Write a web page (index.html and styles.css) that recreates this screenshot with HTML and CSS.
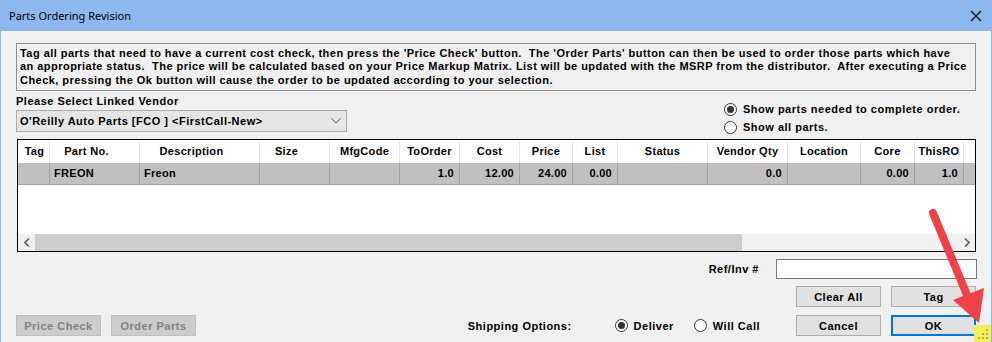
FILE: index.html
```html
<!DOCTYPE html>
<html lang="en">
<head>
    <meta charset="UTF-8">
    <title>Parts Ordering Revision</title>
    <link rel="stylesheet" href="styles.css">
</head>
<body>
<div class="window">
    <div class="titlebar">
        <span class="title">Parts Ordering Revision</span>
        <svg class="close" width="12" height="12" viewBox="0 0 12 12">
            <path d="M1 1 L11 11 M11 1 L1 11" stroke="#000" stroke-width="1.1" fill="none"/>
        </svg>
    </div>
    <div class="content">
        <div class="info">
            Tag all parts that need to have a current cost check, then press the 'Price Check' button.&nbsp; The 'Order Parts' button can then be used to order those parts which have<br>
            an appropriate status.&nbsp; The price will be calculated based on your Price Markup Matrix. List will be updated with the MSRP from the distributor.&nbsp; After executing a Price<br>
            Check, pressing the Ok button will cause the order to be updated according to your selection.
        </div>
        <div class="vendor-row">
            <div class="vendor">
                <div class="label">Please Select Linked Vendor</div>
                <div class="combo">
                    <span>O'Reilly Auto Parts [FCO ] &lt;FirstCall-New&gt;</span>
                    <svg width="10" height="6" viewBox="0 0 10 6"><path d="M0.5 0.5 L5 5 L9.5 0.5" stroke="#666" fill="none"/></svg>
                </div>
            </div>
            <div class="show-opts">
                <div class="radio"><span class="dot on"></span>Show parts needed to complete order.</div>
                <div class="radio"><span class="dot"></span>Show all parts.</div>
            </div>
        </div>
        <div class="grid">
            <div class="row head">
                <div class="tag">Tag</div>
                <div class="lft">Part No.</div>
                <div class="lft">Description</div>
                <div class="lft">Size</div>
                <div>MfgCode</div>
                <div>ToOrder</div>
                <div>Cost</div>
                <div>Price</div>
                <div>List</div>
                <div>Status</div>
                <div>Vendor Qty</div>
                <div>Location</div>
                <div>Core</div>
                <div>ThisRO</div>
                <div class="fill"></div>
            </div>
            <div class="row data">
                <div></div>
                <div class="txt">FREON</div>
                <div class="txt">Freon</div>
                <div></div>
                <div></div>
                <div class="num">1.0</div>
                <div class="num">12.00</div>
                <div class="num">24.00</div>
                <div class="num">0.00</div>
                <div></div>
                <div class="num">0.0</div>
                <div></div>
                <div class="num">0.00</div>
                <div class="num">1.0</div>
                <div class="fill"></div>
            </div>
            <div class="grid-space"></div>
            <div class="hscroll">
                <div class="sarrow"><svg width="6" height="9" viewBox="0 0 6 9"><path d="M5 0.5 L1 4.5 L5 8.5" stroke="#606060" stroke-width="1.6" fill="none"/></svg></div>
                <div class="thumb"></div>
                <div class="track"></div>
                <div class="sarrow"><svg width="6" height="9" viewBox="0 0 6 9"><path d="M1 0.5 L5 4.5 L1 8.5" stroke="#606060" stroke-width="1.6" fill="none"/></svg></div>
            </div>
        </div>
        <div class="ref-row">
            <span>Ref/Inv #</span>
            <div class="input"></div>
        </div>
        <div class="btn-row">
            <div class="btn">Clear All</div>
            <div class="btn">Tag</div>
        </div>
        <div class="bottom-row">
            <div class="btn disabled">Price Check</div>
            <div class="btn disabled">Order Parts</div>
            <div class="spacer"></div>
            <span class="ship">Shipping Options:</span>
            <div class="radio deliver"><span class="dot on"></span>Deliver</div>
            <div class="radio willcall"><span class="dot"></span>Will Call</div>
            <div class="btn">Cancel</div>
            <div class="btn ok">OK</div>
        </div>
    </div>
    <div class="grip">
        <svg width="17" height="17" viewBox="0 0 17 17" fill="#b8b440">
            <rect x="12" y="4" width="2" height="2"/>
            <rect x="8" y="8" width="2" height="2"/><rect x="12" y="8" width="2" height="2"/>
            <rect x="4" y="12" width="2" height="2"/><rect x="8" y="12" width="2" height="2"/><rect x="12" y="12" width="2" height="2"/>
        </svg>
    </div>
    <svg class="arrow" width="992" height="342" viewBox="0 0 992 342">
        <line x1="933" y1="213" x2="967" y2="295" stroke="#ef4146" stroke-width="8" stroke-linecap="round"/>
        <polygon points="953,300 984,288 979,323" fill="#ef4146"/>
    </svg>
</div>
</body>
</html>
```

FILE: styles.css
```css
body{
    margin:0;
    background:#f0f0f0;
    font:bold 11px "Liberation Sans", Arial, sans-serif;
    letter-spacing:0.5px;
    color:#000;
}
.window{
    position:relative;
    width:992px;
    height:342px;
    box-sizing:border-box;
    border-left:1px solid #8cb8ee;
    border-right:1px solid #8cb8ee;
    overflow:hidden;
}
.titlebar{
    height:31px;
    background:#8cb8ee;
    display:flex;
    align-items:center;
    justify-content:space-between;
    padding:0 9px 0 8px;
}
.title{font:normal 11px "Noto Sans", sans-serif;letter-spacing:0;}
.content{padding:12px 15px 0;}

.info{
    height:40px;
    border:1px solid #8e8e8e;
    padding:3px;
    line-height:13.3px;
    letter-spacing:0.46px;
    white-space:nowrap;
}

.vendor-row{display:flex;height:41px;}
.vendor .label{margin-top:4px;line-height:13px;}
.combo{
    margin-top:2px;
    width:331px;
    height:22px;
    box-sizing:border-box;
    border:1px solid #acacac;
    background:#e5e5e5;
    display:flex;
    align-items:center;
    justify-content:space-between;
    padding:0 5px 0 3px;
}
.show-opts{margin-left:auto;width:252px;padding-top:9px;}
.radio{display:flex;align-items:center;height:18px;}
.dot{
    width:13px;
    height:13px;
    box-sizing:border-box;
    border:1px solid #333;
    border-radius:50%;
    background:#fff;
    margin-right:6px;
    display:flex;
    align-items:center;
    justify-content:center;
}
.dot.on::after{
    content:"";
    width:7px;
    height:7px;
    border-radius:50%;
    background:#333;
}

.grid{
    margin:7px 0 0 1px;
    height:113px;
    box-sizing:border-box;
    border:1px solid #000;
    background:#fff;
    display:flex;
    flex-direction:column;
}
.row{
    display:grid;
    grid-template-columns:32px 90px 120px 70px 70px 60px 60px 53px 45px 90px 80px 73px 54px 49px 1fr;
    letter-spacing:0.3px;
}
.row > div{
    box-sizing:border-box;
    white-space:nowrap;
    overflow:hidden;
}
.head{height:22px;margin-top:1px;}
.head > div{
    border-right:1px solid #e3e3e3;
    text-align:center;
    line-height:21px;
}
.head .lft{padding-right:16px;}
.head .tag{padding-left:2px;}
.head .fill{border-right:0;}
.data{height:22px;background:#c0c0c0;}
.data > div{
    border-right:1px solid #a0a0a0;
    border-bottom:1px solid #a0a0a0;
    line-height:21px;
}
.data .txt{padding-left:4px;}
.data .num{text-align:right;padding-right:5px;}
.data .fill{border-right:0;}
.grid-space{flex:1;}
.hscroll{display:flex;height:17px;background:#f0f0f0;}
.sarrow{width:17px;display:flex;align-items:center;justify-content:center;}
.thumb{width:707px;background:#cdcdcd;}
.track{flex:1;}

.ref-row{
    display:flex;
    justify-content:flex-end;
    align-items:center;
    gap:17px;
    margin-top:7px;
}
.input{
    width:201px;
    height:20px;
    box-sizing:border-box;
    border:1px solid #7a7a7a;
    background:#fff;
    margin-right:-1px;
}
.btn-row{
    display:flex;
    justify-content:flex-end;
    gap:10px;
    margin-top:7px;
}
.btn{
    width:85px;
    height:21px;
    box-sizing:border-box;
    border:1px solid #adadad;
    background:#e1e1e1;
    display:flex;
    align-items:center;
    justify-content:center;
}
.btn.disabled{background:#cccccc;border-color:#bfbfbf;color:#838383;}
.btn.ok{border:2px solid #0078d7;}
.bottom-row{
    display:flex;
    align-items:center;
    gap:10px;
    margin-top:8px;
}
.bottom-row .spacer{flex:1;}
.ship{margin-right:33px;}
.deliver{margin-right:10px;}
.willcall{margin-right:26px;}

.grip{
    position:absolute;
    right:0;
    bottom:0;
    width:17px;
    height:17px;
    background:#f3ef5c;
}
.arrow{position:absolute;left:-1px;top:0;pointer-events:none;}
```
